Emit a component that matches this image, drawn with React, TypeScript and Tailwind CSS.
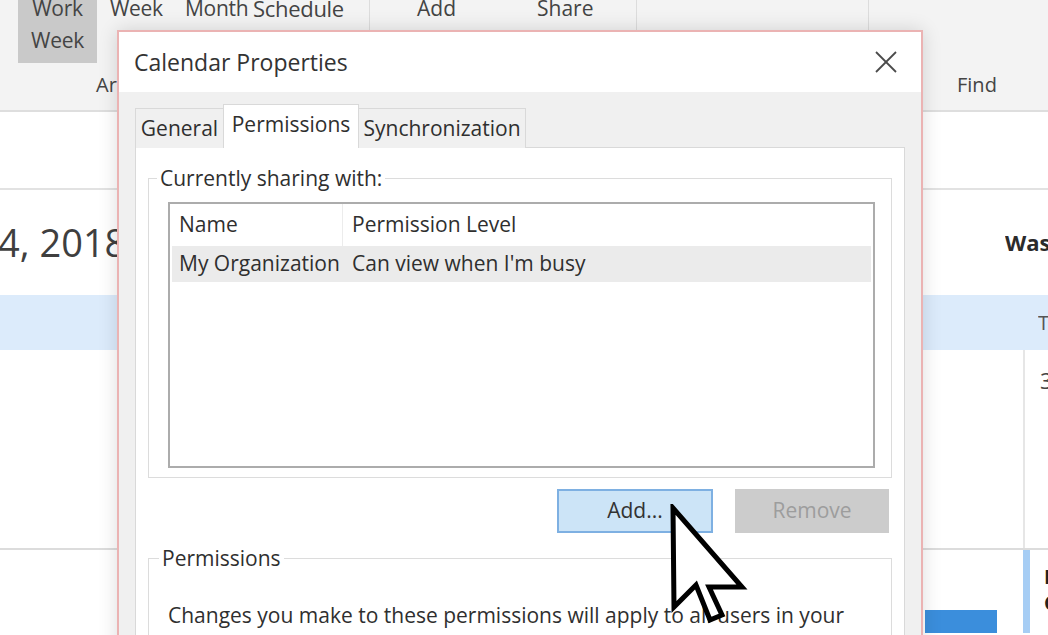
import React from "react";

function CloseIcon() {
  return (
    <svg width="22" height="22" viewBox="0 0 22 22" fill="none" stroke="#4a4a4a" strokeWidth="1.8">
      <line x1="1" y1="1" x2="21" y2="21" />
      <line x1="21" y1="1" x2="1" y2="21" />
    </svg>
  );
}

function Cursor() {
  return (
    <svg className="absolute left-[669px] top-[504px]" width="80" height="124" viewBox="0 0 80 124">
      <path
        d="M4 4 L5 103 L27 81 L41 116 L53 111 L40 83 L73 83 Z"
        fill="#ffffff"
        stroke="#000000"
        strokeWidth="5"
        strokeLinejoin="miter"
      />
    </svg>
  );
}

export default function App() {
  return (
    <div className="relative w-[1048px] h-[635px] overflow-hidden bg-white font-['Open_Sans',sans-serif] text-[#444]">
      {/* Ribbon */}
      <div className="flex h-[112px] bg-[#f3f3f3] border-b-2 border-[#dedede]">
        <div className="w-[370px] shrink-0 flex flex-col border-r border-[#dcdcdc]">
          <div className="h-[70px] flex items-start text-[21px] leading-[32px] tracking-[-0.3px] whitespace-nowrap">
            <div className="ml-[18px] w-[79px] h-[63px] shrink-0 bg-[#c9c9c9] text-center">
              <div className="-mt-[8px]">Work</div>
              <div>Week</div>
            </div>
            <span className="ml-[13px] w-[75px] shrink-0 -mt-[8px]">Week</span>
            <span className="w-[68px] shrink-0 -mt-[8px]">Month</span>
            <span className="-mt-[8px] text-[22px]">Schedule</span>
          </div>
          <div className="pl-[96px] text-[20px] leading-[30px]">Arrange</div>
        </div>
        <div className="w-[267px] shrink-0 flex border-r border-[#dcdcdc] text-[21px] leading-[32px]">
          <span className="ml-[47px] w-[120px] -mt-[8px]">Add</span>
          <span className="-mt-[8px]">Share</span>
        </div>
        <div className="w-[232px] shrink-0 border-r border-[#dcdcdc]" />
        <div className="flex-1 flex flex-col">
          <div className="h-[70px]" />
          <div className="pl-[88px] text-[20px] leading-[30px]">Find</div>
        </div>
      </div>

      {/* Calendar */}
      <div className="flex flex-col">
        <div className="h-[78px] border-b-2 border-[#e2e2e2]" />
        <div className="h-[105px] flex items-center justify-between">
          <span className="-ml-[2px] text-[38px] text-[#3f3f3f]">4, 2018</span>
          <span className="w-[43px] overflow-hidden whitespace-nowrap text-[22px] font-bold text-[#2b2b2b]">Washington</span>
        </div>
        <div className="h-[55px] bg-[#dcebfb] flex justify-end items-center">
          <span className="w-[10px] overflow-hidden text-[20px] text-[#555]">T</span>
        </div>
        <div className="h-[200px] flex border-b-2 border-[#dcdcdc]">
          <div className="w-[1023px] shrink-0" />
          <div className="flex-1 border-l-2 border-[#e6e6e6] pl-[15px] pt-[16px] text-[22px] leading-[28px]">3</div>
        </div>
        <div className="flex h-[83px]">
          <div className="w-[925px] shrink-0" />
          <div className="w-[72px] shrink-0 mt-[60px] bg-[#3b8edc]" />
          <div className="w-[26px] shrink-0" />
          <div className="flex-1 flex">
            <div className="w-[7px] shrink-0 bg-[#a6cdf4]" />
            <div className="pl-[14px] pt-[14px] text-[20px] font-bold leading-[26px] text-[#222]">
              <div className="w-[8px] overflow-hidden">I</div>
              <div className="w-[10px] overflow-hidden">C</div>
            </div>
          </div>
        </div>
      </div>

      {/* Dialog */}
      <div className="absolute left-[117px] top-[30px] w-[806px] h-[640px] border-2 border-[#ebb3b3] bg-[#f0f0f0] shadow-[0_0_18px_rgba(0,0,0,0.14)] text-[#2f2f2f]">
        <div className="h-[60px] bg-white flex items-center justify-between pl-[15px] pr-[24px]">
          <span className="text-[23px] text-[#333]">Calendar Properties</span>
          <CloseIcon />
        </div>
        <div className="px-[16px] pt-[12px] text-[21px]">
          <div className="flex items-end h-[44px] whitespace-nowrap">
            <div className="h-[40px] w-[89px] border border-b-0 border-[#d9d9d9] bg-[#f0f0f0] flex items-center justify-center">General</div>
            <div className="h-[44px] w-[136px] border border-b-0 border-[#d9d9d9] bg-white flex items-center justify-center -mx-px relative z-10 pb-[4px]">Permissions</div>
            <div className="h-[40px] w-[168px] border border-b-0 border-[#d9d9d9] bg-[#f0f0f0] flex items-center justify-center">Synchronization</div>
          </div>
          <div className="-mt-px h-[600px] w-[770px] border border-[#d9d9d9] bg-white px-[12px] pt-[18px]">
            <fieldset className="border border-[#dcdcdc] pl-[19px] pr-[16px] pt-[12px] pb-[9px]">
              <legend className="-ml-[11px] px-[3px] leading-[24px]">Currently sharing with:</legend>
              <div className="h-[266px] border-2 border-[#acacac] bg-white">
                <div className="h-[42px] flex items-center">
                  <div className="w-[173px] h-full pl-[9px] flex items-center border-r border-[#ececec]">Name</div>
                  <div className="pl-[9px]">Permission Level</div>
                </div>
                <div className="mx-[2px] h-[36px] bg-[#ebebeb] flex items-center whitespace-nowrap">
                  <div className="w-[171px] pl-[7px]">My Organization</div>
                  <div className="pl-[9px]">Can view when I'm busy</div>
                </div>
              </div>
            </fieldset>
            <div className="flex justify-end gap-[22px] mt-[11px] pr-[3px]">
              <button className="w-[156px] h-[44px] border-2 border-[#7eb0e2] bg-[#cce4f7] text-[21px] text-[#333]">Add...</button>
              <button className="w-[154px] h-[44px] bg-[#cccccc] text-[21px] text-[#9d9d9d]">Remove</button>
            </div>
            <fieldset className="mt-[13px] h-[200px] border border-[#dcdcdc] pl-[19px] pr-[16px] pt-[33px]">
              <legend className="-ml-[9px] px-[3px] leading-[24px]">Permissions</legend>
              <p className="leading-[24px] whitespace-nowrap">Changes you make to these permissions will apply to all users in your</p>
            </fieldset>
          </div>
        </div>
      </div>

      <Cursor />
    </div>
  );
}
